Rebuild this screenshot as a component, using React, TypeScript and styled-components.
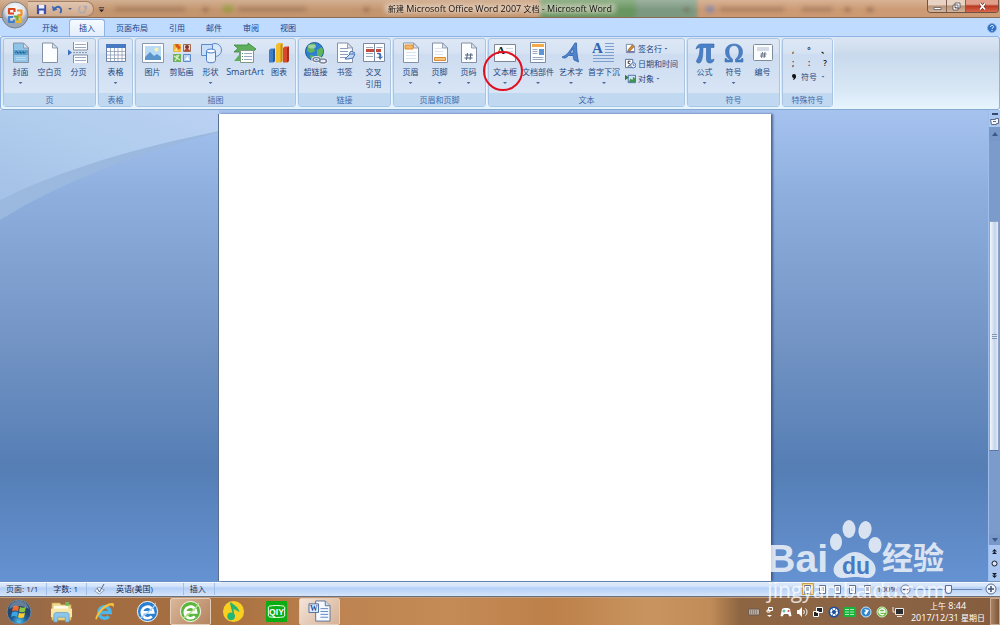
import React from 'react';
import styled, { createGlobalStyle, css } from 'styled-components';

const Global = createGlobalStyle`
  * { box-sizing: border-box; }
  body { margin: 0; font-family: "Open Sans", "Noto Sans CJK SC", sans-serif; font-size: 8px; color: #27477d; }
  button { font: inherit; color: inherit; border: 0; background: none; padding: 0; margin: 0; }
  svg { display: block; flex: none; }
`;

/* ---------- window ---------- */
const Window = styled.div`
  position: relative;
  display: flex;
  flex-direction: column;
  min-height: 100vh;
  overflow: hidden;
`;
const TitleBar = styled.header`
  position: relative;
  display: grid;
  grid-template-columns: 1fr auto 1fr;
  height: 18px;
  overflow: hidden;
  border-bottom: 1px solid #8c6c56;
  background: #c4966f;
`;
const Backdrop = styled.svg`
  position: absolute;
  inset: 0;
  width: 100%;
  height: 100%;
`;
const QuickBar = styled.div`
  position: relative;
  display: flex;
  align-items: center;
  gap: 4px;
  padding-left: 28px;
`;
const QuickPill = styled.div`
  display: flex;
  align-items: center;
  gap: 5px;
  height: 16px;
  padding: 0 5px 0 8px;
  border: 1px solid #a58068;
  border-left: 0;
  border-radius: 0 8px 8px 0;
  background: linear-gradient(#e2c6b0, #cfa98b);
`;
const TitleText = styled.h1`
  position: relative;
  margin: 0;
  font-size: 9px;
  line-height: 18px;
  font-weight: 400;
  color: #16120f;
  text-shadow: 0 0 4px #fff8, 0 0 6px #fff8;
  white-space: nowrap;
`;
const Han = styled.span`
  font-size: 8px;
`;
const WindowButtons = styled.div`
  position: relative;
  justify-self: end;
  display: flex;
  height: 13px;
  margin-right: 1px;
  border: 1px solid #6d5445;
  border-top: 0;
  border-radius: 0 0 4px 4px;
  overflow: hidden;
`;
const WindowButton = styled.button<{ $close?: boolean }>`
  display: grid;
  place-items: center;
  width: ${(p) => (p.$close ? 32 : 19)}px;
  border-right: ${(p) => (p.$close ? 0 : 1)}px solid #7a6050;
  background: ${(p) =>
    p.$close ? 'linear-gradient(#e0a08c 0 35%, #b93a22 50%, #d8674a)' : 'linear-gradient(#e8d3c3 0 40%, #b99478 50%, #d3b39b)'};
`;
const OfficeButton = styled.button`
  position: absolute;
  left: 1px;
  top: 1px;
  width: 28px;
  height: 28px;
  z-index: 3;
`;

/* ---------- tabs and ribbon ---------- */
const TabRow = styled.nav`
  display: flex;
  align-items: stretch;
  gap: 1px;
  height: 18px;
  padding: 1px 3px 0 32px;
  background: #bfdbff;
`;
const Tab = styled.button<{ $active?: boolean }>`
  padding: 0 9px;
  border: 1px solid transparent;
  border-bottom: 0;
  border-radius: 3px 3px 0 0;
  line-height: 14px;
  color: #15428b;
  ${(p) =>
    p.$active &&
    css`
      border-color: #8fb4e4;
      background: linear-gradient(#f6faff, #e3edfa);
    `}
`;
const HelpButton = styled.button`
  margin-left: auto;
  display: grid;
  place-items: center;
`;
const Ribbon = styled.section`
  display: flex;
  gap: 2px;
  height: 74px;
  padding: 1px 2px 2px;
  border: 1px solid #8db2e3;
  border-bottom-color: #86a9cf;
  border-radius: 3px;
  background: linear-gradient(#dbe6f4 0, #cfdded 18%, #c8d9ed 24%, #d8e8f5 75%, #e7f5ff);
`;
const GroupBox = styled.section`
  display: flex;
  flex-direction: column;
  flex: none;
  border: 1px solid #a9c5e6;
  border-radius: 3px;
  box-shadow: 1px 0 0 #eef6ff;
  background: linear-gradient(#dee8f5 0, #d6e3f3 20%, #cddcf0 24%, #dbe8f7);
`;
const GroupBody = styled.div`
  display: flex;
  flex: 1;
  padding: 2px 2px 0;
`;
const GroupName = styled.h2`
  margin: 0;
  height: 13px;
  line-height: 13px;
  font-size: 8px;
  font-weight: 400;
  text-align: center;
  color: #3e6aaa;
  background: #c1d8f1;
`;
const Tool = styled.button<{ $w?: number }>`
  position: relative;
  display: flex;
  flex-direction: column;
  align-items: center;
  width: ${(p) => p.$w ?? 29}px;
  white-space: nowrap;
`;
const ToolLabel = styled.span<{ $latin?: boolean }>`
  font-size: ${(p) => (p.$latin ? 9 : 8)}px;
  line-height: 12px;
  padding-top: 1px;
  white-space: pre-line;
`;
const Caret = styled.span`
  width: 4px;
  height: 2px;
  background: #47679a;
  clip-path: polygon(0 0, 100% 0, 50% 100%);
`;
const ToolCaret = styled(Caret)`
  margin-top: 4px;
`;
const Ring = styled.span`
  position: absolute;
  left: -8px;
  top: 10px;
  width: 40px;
  height: 40px;
  border: 2px solid #e01020;
  border-radius: 50%;
  z-index: 2;
`;
const SmallTools = styled.div`
  display: flex;
  flex-direction: column;
  width: 59px;
  padding-left: 2px;
`;
const SmallTool = styled.button`
  display: flex;
  align-items: center;
  gap: 2px;
  height: 15px;
  line-height: 13px;
  white-space: nowrap;
`;
const SymbolGrid = styled.div`
  display: grid;
  grid-template-columns: repeat(3, 16px);
  grid-auto-rows: 13px;
  align-content: start;
  width: 45px;
  padding-top: 2px;
`;
const SymbolKey = styled.button`
  color: #111;
  font-size: 8px;
  line-height: 13px;
  font-weight: 600;
`;
const SymbolMenu = styled.button`
  grid-column: 1 / -1;
  display: flex;
  align-items: center;
  gap: 4px;
  padding-left: 6px;
  height: 15px;
`;

/* ---------- document area ---------- */
const Workspace = styled.main`
  position: relative;
  display: flex;
  flex: 1;
  background: linear-gradient(#a6c2ef 0, #8fb0df 17%, #7394c4 49%, #557eb5 76%, #6592d2);
`;
const Swoosh = styled.svg`
  position: absolute;
  left: 0;
  top: 0;
`;
const Canvas = styled.div`
  position: relative;
  display: flex;
  flex: 1;
  justify-content: center;
  padding: 4px 0 0 2px;
`;
const Paper = styled.article`
  width: 56%;
  background: #fff;
  box-shadow: -1px 0 0 #5a6e8e, 2px 0 2px #33507fcc;
`;
const Scroll = styled.aside`
  position: relative;
  display: flex;
  flex-direction: column;
  width: 12px;
  border-left: 1px solid #9dbdec;
  background: #a9c6f1;
`;
const ScrollButton = styled.button<{ $h: number; $dark?: boolean }>`
  display: grid;
  place-items: center;
  height: ${(p) => p.$h}px;
  background: ${(p) => (p.$dark ? '#7798c8' : 'transparent')};
`;
const Track = styled.div`
  display: flex;
  flex-direction: column;
  flex: 1;
  background: #7b9ccb;
`;
const TrackGap = styled.div<{ $grow: number }>`
  flex: ${(p) => p.$grow};
`;
const Thumb = styled.div`
  display: grid;
  place-items: center;
  flex: 229;
  margin-right: 1px;
  border: 1px solid #8ba3c9;
  border-bottom-color: #5b76a2;
  background: linear-gradient(90deg, #f4f8fd, #c4d3ea 60%, #e3ebf7);
`;
const Grip = styled.span`
  width: 5px;
  height: 5px;
  background: repeating-linear-gradient(#8295b4 0 1px, #dbe4f2 1px 2px);
`;

/* ---------- status bar ---------- */
const StatusBar = styled.footer`
  display: flex;
  align-items: center;
  height: 16px;
  border-top: 1px solid #6f92c4;
  border-bottom: 1px solid #68707e;
  box-shadow: inset 0 1px 0 #f2f7ff;
  background: linear-gradient(#d9e7fb 0 25%, #b5d0f6 45%, #d6e5fa);
  line-height: 14px;
  color: #1d2c4c;
`;
const StatusCell = styled.button<{ $wide?: boolean }>`
  display: flex;
  align-items: center;
  height: 12px;
  padding: 0 ${(p) => (p.$wide ? 30 : 8)}px 0 6px;
  border-right: 1px solid #a3bee6;
`;
const StatusCheck = styled(StatusCell)`
  border-right: 0;
  padding: 0 4px 0 6px;
`;
const StatusRight = styled.div`
  display: flex;
  align-items: center;
  gap: 3px;
  margin-left: auto;
  padding-right: 3px;
`;
const ViewButton = styled.button<{ $on?: boolean }>`
  display: grid;
  place-items: center;
  width: 12px;
  height: 12px;
  border: 1px solid ${(p) => (p.$on ? '#c9a04e' : 'transparent')};
  background: ${(p) => (p.$on ? '#fbd992' : 'transparent')};
`;
const ZoomRange = styled.input`
  appearance: none;
  width: 68px;
  height: 12px;
  margin: 0;
  background: linear-gradient(#6d87b3, #6d87b3) center / 100% 1px no-repeat;
  &::-webkit-slider-thumb {
    appearance: none;
    width: 7px;
    height: 9px;
    border: 1px solid #566f9d;
    border-radius: 1px 1px 4px 4px;
    background: #f2f6fd;
  }
`;

/* ---------- taskbar ---------- */
const TaskBar = styled.footer`
  display: flex;
  align-items: stretch;
  height: 28px;
  border-top: 1px solid #c59c7a;
  background: linear-gradient(90deg, #93694b 0, #a06b42 8%, #a8703f 22%, #bd8350 34%, #c48b57 45%, #bd8049 55%, #c99460 65%, #c18c58 71%, #8d6542 74%, #8b6446 88%, #855d3e);
`;
const TaskButton = styled.button<{ $open?: boolean; $front?: boolean }>`
  display: grid;
  place-items: center;
  width: 41px;
  margin-right: 2px;
  border: 1px solid transparent;
  border-radius: 2px;
  ${(p) =>
    p.$open &&
    css`
      border-color: #e6cdb9;
      background: ${p.$front ? 'linear-gradient(135deg, #f3e4d8, #d5b196)' : 'linear-gradient(135deg, #d9b799, #b48460)'};
    `}
`;
const StartButton = styled.button`
  display: grid;
  place-items: center;
  width: 37px;
  margin-right: 4px;
`;
const Tray = styled.div`
  display: flex;
  align-items: center;
  margin-left: auto;
`;
const TrayButton = styled.button`
  display: grid;
  place-items: center;
  width: 16px;
  height: 20px;
`;
const Clock = styled.time`
  width: 84px;
  font-size: 9px;
  line-height: 12px;
  text-align: center;
  color: #fff;
  white-space: nowrap;
`;
const ShowDesktop = styled.button`
  width: 10px;
  border: 1px solid #c9a78c;
  background: linear-gradient(90deg, #a98466, #7c5638);
`;

/* ---------- watermark ---------- */
const Watermark = styled.div`
  position: absolute;
  right: 54px;
  bottom: 23px;
  z-index: 4;
  opacity: 0.76;
  color: #fff;
  text-align: right;
`;
const MarkRow = styled.div`
  display: flex;
  align-items: flex-end;
  justify-content: flex-end;
  height: 60px;
  padding-right: 2px;
  font-family: "Liberation Sans", "Noto Sans CJK SC", sans-serif;
  font-weight: 700;
`;
const MarkLatin = styled.span`
  font-size: 39px;
  line-height: 38px;
`;
const MarkHan = styled.span`
  font-size: 31px;
  line-height: 38px;
`;
const MarkUrl = styled.div`
  font-size: 21px;
  line-height: 24px;
`;

/* ---------- drawings ---------- */
const Ico = ({ children, s = 24, v = 24 }: { children: React.ReactNode; s?: number; v?: number }) => (
  <svg width={s} height={s} viewBox={`0 0 ${v} ${v}`} aria-hidden="true">
    {children}
  </svg>
);
const Sheet = ({ fill = '#fbfdff' }: { fill?: string }) => (
  <>
    <path d="M4.500 2h10l5 5v14.500h-15z" fill={fill} stroke="#8491a6" />
    <path d="M14.500 2v5h5z" fill="#d9e2ee" stroke="#8491a6" strokeWidth=".8" />
  </>
);
const Lines = ({ x, w, ys, c = '#9aa9c2' }: { x: number; w: number; ys: number[]; c?: string }) => (
  <path d={ys.map((y) => `M${x} ${y}h${w}`).join('')} stroke={c} fill="none" />
);

const icons: Record<string, React.ReactNode> = {
  cover: (
    <Ico>
      <Sheet fill="#8fc4e6" />
      <path d="M5 9h14v5H5z" fill="#5ea3d0" />
      <path d="M6 11.500l2-1 1 2 2-2 1 2 2-2 1 2 2-2" stroke="#1c5b8f" fill="none" />
      <Lines x={7} w={10} ys={[16.5, 18.5]} c="#b9dcf0" />
    </Ico>
  ),
  blank: <Ico><Sheet /></Ico>,
  pageBreak: (
    <Ico>
      <path d="M6.500 1v8h14V1M6.500 22v-8h14v8" fill="#fff" stroke="#7f8da5" />
      <Lines x={8} w={11} ys={[3.5, 6.5, 16.5, 19.5]} />
      <path d="M6 11.500h15" stroke="#8d9ab0" strokeDasharray="2 1" />
      <path d="M1 8.500l4 3-4 3z" fill="#3d6fc0" />
    </Ico>
  ),
  table: (
    <Ico>
      <path d="M2.500 3.500h19v17h-19z" fill="#fff" stroke="#6b84ad" />
      <path d="M2 3h20v4H2z" fill="#4a79c4" />
      <path d="M3 10.500h18M3 14h18M3 17.500h18M6.500 7v13M10.500 7v13M14 7v13M18 7v13" stroke="#8d9ab2" strokeWidth=".8" />
    </Ico>
  ),
  picture: (
    <Ico>
      <path d="M1.500 2.500h21v19h-21z" fill="#fff" stroke="#8b98ad" />
      <path d="M4 5h16v14H4z" fill="#b7daf5" />
      <path d="M4 16l5-5 4 4 3-2 4 3v3H4z" fill="#5b94cb" />
      <circle cx="15.500" cy="8.500" r="2" fill="#fff1a8" />
    </Ico>
  ),
  clipArt: (
    <Ico>
      <path d="M3 3h8v8H3z" fill="#f3b433" /><path d="M5 3h3l3 4-4 2z" fill="#d5581f" /><path d="M4 10l3-4 1 4z" fill="#ffe27a" />
      <path d="M13.500 3.500h7v7h-7z" fill="#f0dcd0" stroke="#9a6a55" /><circle cx="17" cy="6" r="2" fill="#7d3527" /><path d="M14 10c1-3 5-3 6 0z" fill="#b74a36" />
      <path d="M3 13h8v8H3z" fill="#72b45a" /><path d="M4 15l6 4M9 14l-4 6M7 14v2" stroke="#d9f0c8" strokeWidth="1.200" />
      <path d="M13.500 13.500h7v7h-7z" fill="#b8d3f4" stroke="#5f8ccb" /><path d="M15 19l3-4 1 4z" fill="#fff" />
    </Ico>
  ),
  shapes: (
    <Ico>
      <circle cx="16" cy="9" r="6.500" fill="#d9e9fb" stroke="#5a8aca" />
      <path d="M2.500 3.500h11v11h-11z" fill="#c9defa" stroke="#5a8aca" />
      <path d="M7.500 10v9.500c0 3 9 3 9 0V10z" fill="#e8f2fe" stroke="#4a7fc6" />
      <ellipse cx="12" cy="10" rx="4.500" ry="2" fill="#fff" stroke="#4a7fc6" />
    </Ico>
  ),
  smartArt: (
    <Ico>
      <path d="M1 4h14V2l8 6-7 6V11H1l4-3.500z" fill="#5fae5a" stroke="#37853d" strokeWidth=".8" />
      <path d="M1 20l5-6V8h4v12z" fill="#5fae5a" />
      <path d="M7.500 9.500h13v12h-13z" fill="#fff" stroke="#809a85" />
      <Lines x={11} w={8} ys={[12.5, 15.5, 18.5]} /><Lines x={9} w={1} ys={[12.5, 15.5, 18.5]} c="#3d8f49" />
    </Ico>
  ),
  chart: (
    <Ico>
      <path d="M2 9l2-1.500h4V20l-2 1.500H2z" fill="#3f7fca" />
      <path d="M9 4l2-2h4.500v18l-2 1.500H9z" fill="#f2bd2b" /><path d="M13.500 4l2-2v18l-2 1.500z" fill="#c98e12" />
      <path d="M16 7l2-1.500h4V20l-2 1.500h-4z" fill="#d8482d" /><path d="M20 7l2-1.500V20l-2 1.500z" fill="#a3301c" />
      <path d="M6 9l2-1.500V20l-2 1.500z" fill="#265a9c" />
    </Ico>
  ),
  link: (
    <Ico>
      <circle cx="10.500" cy="10.500" r="9" fill="#2f7fcf" stroke="#205c9c" />
      <path d="M4 5c3-3 7-3 8-1l-2 3 1 3-4 2-4-2zM13 9l5-3c2 4 1 8-2 11l-3-3zM6 14l4 1-1 4c-2 0-3-2-3-5z" fill="#5fb45c" />
      <ellipse cx="8" cy="5.500" rx="4" ry="2" fill="#fff" opacity=".4" />
      <g fill="none" strokeWidth="3.200" stroke="#f2f5fa"><ellipse cx="12.500" cy="18.500" rx="3.500" ry="2" /><ellipse cx="19" cy="20" rx="3.500" ry="2" /></g>
      <g fill="none" strokeWidth="1.500" stroke="#75839b"><ellipse cx="12.500" cy="18.500" rx="3.500" ry="2" /><ellipse cx="19" cy="20" rx="3.500" ry="2" /></g>
    </Ico>
  ),
  bookmark: (
    <Ico>
      <Sheet />
      <Lines x={7} w={8} ys={[7.5, 10.5, 13.5, 16.5]} c="#8d9cb8" />
      <path d="M12 18l5-5 5 0-2 4-5 1zM16 13l2-3 4 2" fill="#c3d8f4" stroke="#4571b4" />
    </Ico>
  ),
  crossRef: (
    <Ico>
      <path d="M1.500 2.500h11v18h-11zM12.500 2.500h10v18h-10z" fill="#fff" stroke="#7b89a1" />
      <Lines x={4} w={7} ys={[6.5, 12.5, 15.5]} /><Lines x={14.500} w={6} ys={[6.5, 16.5]} />
      <path d="M4 8h8v3H4z" fill="#c54b3c" /><path d="M14 8h5v3h-5z" fill="#c54b3c" />
      <path d="M15 12c4-1 5 1 4 4l2-1-3 4-2-4 1 1c1-2 0-3-2-3z" fill="#3f6eb8" />
    </Ico>
  ),
  header: (<Ico><Sheet /><path d="M6 4h8v4H6z" fill="#f5b667" stroke="#d98e35" /><Lines x={7} w={10} ys={[11.5, 14.5, 17.5]} c="#dce4ef" /></Ico>),
  footer: (<Ico><Sheet /><path d="M6.500 16.500h11v3h-11z" fill="#f5c47e" stroke="#d98e35" /><Lines x={7} w={8} ys={[7.5, 10.5, 13.5]} c="#dce4ef" /></Ico>),
  pageNo: (<Ico><Sheet /><path d="M10.500 12l-1 7M14 12l-1 7M8 14h8M7.500 17h8" stroke="#52637f" /></Ico>),
  textBox: (
    <Ico>
      <path d="M1.500 3.500h21v17h-21z" fill="#fbfcfe" stroke="#7f8794" />
      <Lines x={13} w={7} ys={[7.5, 10.5]} c="#d3dae5" />
      <text x="4" y="13" fontSize="11" fontWeight="700" fontFamily="Liberation Serif, serif" fill="#222">A</text>
    </Ico>
  ),
  parts: (
    <Ico>
      <path d="M4.500 1.500h15v20h-15z" fill="#fbfdff" stroke="#7d8ca4" />
      <path d="M6 3h12v3H6z" fill="#f3ab47" /><path d="M13 8h5v6h-5z" fill="#5c94d6" />
      <Lines x={6.500} w={5} ys={[8.5, 10.5, 12.5]} /><Lines x={6.500} w={11} ys={[16.5, 18.5]} />
    </Ico>
  ),
  wordArt: (
    <Ico>
      <path d="M3 16C8 15 12 8 16 2h1.500c0 7 .5 12 2 19l-4.500-2c-.5-1.500-.7-3-.8-4.500H9.500C7.500 17 5 18 3 16zM11 12h3.200V7.500z" fill="#4d84cb" stroke="#2f61a8" strokeWidth=".8" fillRule="evenodd" />
    </Ico>
  ),
  dropCap: (
    <Ico>
      <path d="M13 2.500h9M13 5.500h9M13 8.500h9M13 11.500h9M1 14.500h21M1 17.500h21M1 20.500h21" stroke="#7c9fd0" />
      <text x="0" y="12" fontSize="15" fontWeight="700" fontFamily="Liberation Serif, serif" fill="#2f65b3">A</text>
    </Ico>
  ),
  pi: (
    <Ico>
      <path d="M3 8C4 4 6 3 9 3h12v3.500h-3.500V17c0 2 1.500 2.500 3.500 1-.5 3-2 4-4 4-3 0-3.500-2-3.500-4V6.500H10c0 6-.5 11-2 14-1 2-4 2-4.500 0C3.500 18 7 17 7 6.500 5.500 6.500 4.500 7 3 8z" fill="#4a80c5" stroke="#2f64ab" strokeWidth=".6" />
    </Ico>
  ),
  omega: (
    <Ico>
      <path d="M3 17.500h1.500l.8 1.500H9C5 17 3.500 14.500 3.500 10.500 3.500 6 7 3 12 3s8.500 3 8.500 7.500c0 4-1.500 6.500-5.500 8.500h3.700l.8-1.500H21V21h-7.500v-3C16 16.500 17 14 17 10.500 17 7 15 4.500 12 4.500s-5 2.500-5 6c0 3.500 1 6 3.500 7.500v3H3z" fill="#4a80c5" stroke="#2f64ab" strokeWidth=".5" />
    </Ico>
  ),
  number: (
    <Ico>
      <rect x="2.500" y="3.500" width="19" height="16" rx="1" fill="#fbfcfe" stroke="#818b9c" />
      <path d="M6 6h12v4H6z" fill="#d5dbe5" />
      <path d="M11.500 11l-1 6M14 11l-1 6M9.500 13h6M9 15h6" stroke="#4c5a72" strokeWidth=".8" />
    </Ico>
  ),
  sign: (<Ico s={11} v={12}><path d="M1.500 1.500h7l2 2v7h-9z" fill="#fff" stroke="#7586a3" /><path d="M3 8l5-6 2 2-5 5z" fill="#d58a2e" stroke="#6a4312" strokeWidth=".6" /><path d="M2 9.500h8" stroke="#5c3d8c" /></Ico>),
  date: (<Ico s={11} v={12}><path d="M.5 1.500h8v9h-8z" fill="#fff" stroke="#4d679a" /><path d="M6 3.500H3.500V6C6 5 7 9 3 9" fill="none" stroke="#222" /><circle cx="9" cy="8" r="2.800" fill="#eaf2fd" stroke="#4270b6" /><path d="M9 6.500V8h1.500" stroke="#24437a" fill="none" strokeWidth=".7" /></Ico>),
  object: (<Ico s={11} v={12}><path d="M3.500 2.500h8v8h-8z" fill="#cfe2f8" stroke="#456aa5" /><path d="M4 10l2-4 2 2 1-4 2 2v4z" fill="#3c9650" /><path d="M0 2l4 3-4 3z" fill="#2d7a3d" /></Ico>),
};

type Item = { icon: string; label: string; caret?: boolean; w?: number; latin?: boolean; ring?: boolean };
const tools: Record<string, Item[]> = {
  页: [{ icon: 'cover', label: '封面', caret: true }, { icon: 'blank', label: '空白页' }, { icon: 'pageBreak', label: '分页' }],
  表格: [{ icon: 'table', label: '表格', caret: true }],
  插图: [
    { icon: 'picture', label: '图片' }, { icon: 'clipArt', label: '剪贴画' }, { icon: 'shapes', label: '形状', caret: true },
    { icon: 'smartArt', label: 'SmartArt', w: 40, latin: true }, { icon: 'chart', label: '图表', w: 28 },
  ],
  链接: [{ icon: 'link', label: '超链接' }, { icon: 'bookmark', label: '书签' }, { icon: 'crossRef', label: '交叉\n引用' }],
  页眉和页脚: [{ icon: 'header', label: '页眉', caret: true }, { icon: 'footer', label: '页脚', caret: true }, { icon: 'pageNo', label: '页码', caret: true }],
  文本: [
    { icon: 'textBox', label: '文本框', caret: true, w: 28, ring: true }, { icon: 'parts', label: '文档部件', caret: true, w: 38 },
    { icon: 'wordArt', label: '艺术字', caret: true, w: 28 }, { icon: 'dropCap', label: '首字下沉', caret: true, w: 38 },
  ],
  符号: [{ icon: 'pi', label: '公式', caret: true }, { icon: 'omega', label: '符号', caret: true }, { icon: 'number', label: '编号' }],
};

const Group = ({ name, children }: { name: string; children?: React.ReactNode }) => (
  <GroupBox aria-label={name}>
    <GroupBody>
      {(tools[name] ?? []).map((t) => (
        <Tool key={t.label} $w={t.w}>
          {icons[t.icon]}
          <ToolLabel $latin={t.latin}>{t.label}</ToolLabel>
          {t.caret && <ToolCaret />}
          {t.ring && <Ring />}
        </Tool>
      ))}
      {children}
    </GroupBody>
    <GroupName>{name}</GroupName>
  </GroupBox>
);

const Flag = () => (
  <>
    <path d="M5 8c2-1.500 4-1.500 6-.3l-1 4.800c-2-1.200-4-1.200-6 0z" fill="#ef6a30" />
    <path d="M12 8c2 1 4 1 6-.3l-1 4.800c-2 1-4 1-6 0z" fill="#8cc63f" />
    <path d="M4 13.500c2-1.200 4-1.200 6 0l-1 4.500c-2-1.200-4-1.200-6 0z" fill="#3ba4e4" />
    <path d="M11 13.800c2 1 4 1 6-.2l-1 4.600c-2 1-4 1-6 0z" fill="#fccb2f" />
  </>
);

const trayIcons: [string, React.ReactNode][] = [
  ['键盘', <Ico key="i" s={12} v={12}><rect x=".5" y="3" width="11" height="6" rx="1" fill="#b9aea6" stroke="#6b5a4e" /><path d="M2 5h8M2 7h8" stroke="#6b5a4e" strokeDasharray="1 1" /></Ico>],
  ['显示隐藏的图标', <Ico key="i" s={12} v={12}><path d="M4.500 1.500h4v3h-4zM3 4h3v2H3z" fill="none" stroke="#fff" /><path d="M3 9h5l-2.500 2z" fill="#fff" /></Ico>],
  ['游戏', <Ico key="i" s={12} v={12}><path d="M2 3l2-1h4l2 1 1.500 7-2 .5L8 8H4l-1.500 2.500-2-.5z" fill="#fff" /><path d="M2.500 5h3M4 3.500v3" stroke="#3a9" /><circle cx="8.500" cy="5" r="1" fill="#d44" /></Ico>],
  ['音量', <Ico key="i" s={12} v={12}><path d="M1 4h2l3-3v10L3 8H1z" fill="#fff" /><path d="M7.500 4c1 1 1 3 0 4M9.500 2.500c2 2 2 5 0 7" stroke="#fff" fill="none" /></Ico>],
  ['网络', <Ico key="i" s={12} v={12}><path d="M4.500 1.500h6v5h-6zM1.500 5.500h5v5h-5z" fill="#222" stroke="#fff" /></Ico>],
  ['安全', <Ico key="i" s={12} v={12}><circle cx="6" cy="6" r="5.500" fill="#1d4f9c" /><circle cx="6" cy="6" r="3" fill="none" stroke="#fff" strokeWidth="2" strokeDasharray="2.500 .6" /></Ico>],
  ['爱奇艺', <Ico key="i" s={12} v={12}><path d="M0 1h12v10H0z" fill="#17b53a" /><path d="M1 3.500h10M1 6h10M1 8.500h10" stroke="#a9eeb5" strokeDasharray="4 1" /></Ico>],
  ['同步', <Ico key="i" s={12} v={12}><circle cx="6" cy="6" r="5" fill="#2d87cf" stroke="#cde6fa" /><path d="M4 3l5 1-3 5-2-2 2-2z" fill="#fff" /></Ico>],
  ['浏览器', <Ico key="i" s={12} v={12}><circle cx="6" cy="6" r="5" fill="#62b83a" stroke="#d4f2c0" /><path d="M3 6h6a3 3 0 1 0-1 2" stroke="#fff" strokeWidth="1.300" fill="none" /></Ico>],
  ['显示器', <Ico key="i" s={12} v={12}><path d="M3.500 2.500h8v6h-8z" fill="#2c2c2c" stroke="#e8e8e8" /><path d="M5 10.500h5M1 1v5h2" stroke="#e8e8e8" fill="none" /></Ico>],
];

const Browser = ({ a, b, ring }: { a: string; b: string; ring?: boolean }) => (
  <Ico s={23}>
    {ring && <circle cx="12" cy="12" r="10.500" fill={b} stroke="#fff" strokeWidth="1" />}
    <path d="M5.500 13h12.500a6 6 0 1 0-1.500 4" fill="none" stroke={ring ? '#fff' : a} strokeWidth={ring ? 2.8 : 3.6} />
    {ring ? <path d="M4 18C1 23 22 6 20 3" fill="none" stroke={a} strokeWidth="1.500" /> : <path d="M4 20C-1 23 8 3 20 3c3 0 2 3 1 5 0-6-13 1-17 12z" fill="#f7c13a" />}
  </Ico>
);

export default function App() {
  return (
    <Window>
      <Global />
      <TitleBar>
        <Backdrop viewBox="0 0 1000 18" preserveAspectRatio="none" aria-hidden="true">
          <defs>
            <filter id="soft" x="-10%" y="-60%" width="120%" height="220%"><feGaussianBlur stdDeviation="2" /></filter>
            <linearGradient id="sheen" x2="0" y2="1"><stop stopColor="#fff" stopOpacity=".25" /><stop offset=".6" stopColor="#fff" stopOpacity="0" /></linearGradient>
          </defs>
          <path d="M697 0h303v18H697z" fill="#cc9a73" />
          <g filter="url(#soft)">
            <path d="M540 -4h100v26H540z" fill="#689560" /><path d="M636 -4h61v26h-61z" fill="#7c9880" />
            <path d="M115 7h70v5h-70zM238 7h68v5h-68zM720 7h64v5h-64zM802 7h30v5h-30z" fill="#8d654a" opacity=".5" />
            <path d="M223 5h10v8h-10z" fill="#9a9a45" /><path d="M706 6h8v7h-8z" fill="#8a86a5" />
            <path d="M203 8h5v4h-5zM364 8h5v4h-5zM684 8h5v4h-5zM845 8h5v4h-5zM867 8h6v4h-6z" fill="#76523d" opacity=".7" />
            <path d="M384 4h232v10H384z" fill="#eadccf" opacity=".45" />
          </g>
          <path d="M0 0h1000v18H0z" fill="url(#sheen)" />
        </Backdrop>
        <QuickBar>
          <QuickPill>
            <button aria-label="保存"><Ico s={11} v={12}><path d="M1 1h10v10H1z" fill="#3b4fae" /><path d="M3 1h6v4H3zM3.500 7h5v4h-5z" fill="#eef1fb" /></Ico></button>
            <button aria-label="撤消"><Ico s={11} v={12}><path d="M3 5c4-4 9-1 6 5" fill="none" stroke="#3566b8" strokeWidth="2" /><path d="M0 2l1 6 5-2z" fill="#3566b8" /></Ico></button>
            <Caret />
            <button aria-label="恢复"><Ico s={11} v={12}><path d="M9 4c2 6-7 8-7 2 0-2 1-3 2-3" fill="none" stroke="#a8a9b5" strokeWidth="1.500" /><path d="M6 2h5v4z" fill="#a8a9b5" /></Ico></button>
          </QuickPill>
          <button aria-label="自定义快速访问工具栏"><Ico s={7} v={8}><path d="M1 2h6" stroke="#2b2430" /><path d="M1 4h6L4 7z" fill="#2b2430" /></Ico></button>
        </QuickBar>
        <TitleText><Han>新建</Han> Microsoft Office Word 2007 <Han>文档</Han> - Microsoft Word</TitleText>
        <WindowButtons>
          <WindowButton aria-label="最小化"><Ico s={9} v={9}><path d="M1 5.500h7v2H1z" fill="#fff" stroke="#4d4d55" strokeWidth=".7" /></Ico></WindowButton>
          <WindowButton aria-label="还原"><Ico s={9} v={9}><path d="M3 1h5v5H3zM1 3h5v5H1z" fill="#fff" stroke="#4d4d55" strokeWidth=".8" /><path d="M3 5h1.500v1H3z" fill="#4d4d55" /></Ico></WindowButton>
          <WindowButton $close aria-label="关闭"><Ico s={9} v={9}><path d="M2 1.500l5 6M7 1.500l-5 6" stroke="#6b2a20" strokeWidth="3" /><path d="M2 1.500l5 6M7 1.500l-5 6" stroke="#fff" strokeWidth="1.800" /></Ico></WindowButton>
        </WindowButtons>
      </TitleBar>
      <OfficeButton aria-label="Office">
        <svg width="28" height="28" viewBox="0 0 28 28" aria-hidden="true">
          <defs><radialGradient id="orb" cy=".3"><stop stopColor="#fff" /><stop offset=".7" stopColor="#dfe3ea" /><stop offset="1" stopColor="#9ba6b8" /></radialGradient></defs>
          <circle cx="14" cy="14" r="13" fill="url(#orb)" stroke="#7d7f88" />
          <g fill="none" strokeWidth="2.200" strokeLinejoin="round">
            <path d="M13 12.500H8V8h5.500v3" stroke="#d8481f" /><path d="M16 9.500h4.500v4.500h-4" stroke="#f0902a" />
            <path d="M12 16H8v5h5v-2.500" stroke="#3f7fcb" /><path d="M15 16h5v5h-5z" stroke="#f0b429" /><path d="M12.500 15.500h4v4" stroke="#6aab3d" />
          </g>
        </svg>
      </OfficeButton>

      <TabRow>
        {['开始', '插入', '页面布局', '引用', '邮件', '审阅', '视图'].map((t) => (
          <Tab key={t} $active={t === '插入'}>{t}</Tab>
        ))}
        <HelpButton aria-label="帮助">
          <Ico s={10} v={10}><circle cx="5" cy="5" r="4.500" fill="#2f6fc4" stroke="#87aede" /><path d="M3.500 4c0-2 3.300-2 3 0-.2 1-1.500 1-1.500 2M5 7v1" stroke="#fff" fill="none" /></Ico>
        </HelpButton>
      </TabRow>

      <Ribbon>
        <Group name="页" />
        <Group name="表格" />
        <Group name="插图" />
        <Group name="链接" />
        <Group name="页眉和页脚" />
        <Group name="文本">
          <SmallTools>
            <SmallTool>{icons.sign}签名行<Caret /></SmallTool>
            <SmallTool>{icons.date}日期和时间</SmallTool>
            <SmallTool>{icons.object}对象<Caret /></SmallTool>
          </SmallTools>
        </Group>
        <Group name="符号" />
        <Group name="特殊符号">
          <SymbolGrid>
            {[',', '°', '、', ';', ':', '?'].map((s) => <SymbolKey key={s}>{s}</SymbolKey>)}
            <SymbolMenu>
              <Ico s={6} v={6}><circle cx="3" cy="2" r="2" fill="#111" /><path d="M5 2c0 2-1 3.500-3 4l1-3z" fill="#111" /></Ico>
              符号<Caret />
            </SymbolMenu>
          </SymbolGrid>
        </Group>
      </Ribbon>

      <Workspace>
        <Swoosh width="219" height="112" viewBox="0 0 219 112" aria-hidden="true">
          <defs>
            <linearGradient id="sky" x1="0" y1="1" x2="1" y2="0"><stop stopColor="#a4c1e6" /><stop offset=".5" stopColor="#b0cdee" /><stop offset="1" stopColor="#bcd1f4" /></linearGradient>
          </defs>
          <path d="M0 0h240v17C160 36 70 66 0 110z" fill="#9bb8df" />
          <path d="M0 0h240v17C150 34 70 56 0 90z" fill="url(#sky)" />
        </Swoosh>
        <Canvas><Paper aria-label="文档" /></Canvas>
        <Scroll>
          <ScrollButton $h={6} aria-label="拆分"><Ico s={6} v={6}><path d="M0 4h6" stroke="#34496f" strokeWidth="2" /></Ico></ScrollButton>
          <ScrollButton $h={11} aria-label="标尺"><Ico s={9} v={9}><path d="M.5 2.500h5v-1h3v5h-2v1h-5z" fill="#f4f6fa" stroke="#5c6a84" /><path d="M3 4.500h3" stroke="#5c6a84" /></Ico></ScrollButton>
          <ScrollButton $h={14} $dark aria-label="向上滚动"><Ico s={6} v={6}><path d="M0 5l3-4 3 4z" fill="#3c5788" /></Ico></ScrollButton>
          <Track><TrackGap $grow={81} /><Thumb><Grip /></Thumb><TrackGap $grow={84} /></Track>
          <ScrollButton $h={11} $dark aria-label="向下滚动"><Ico s={6} v={6}><path d="M0 1l3 4 3-4z" fill="#3c5788" /></Ico></ScrollButton>
          <ScrollButton $h={12} aria-label="前一页"><Ico s={5} v={6}><path d="M0 3l3-3 3 3zM0 6l3-3 3 3z" fill="#161c2c" /></Ico></ScrollButton>
          <ScrollButton $h={12} aria-label="选择浏览对象"><Ico s={7} v={7}><circle cx="3.500" cy="3.500" r="2.500" fill="#d8e2f2" stroke="#161c2c" /></Ico></ScrollButton>
          <ScrollButton $h={12} aria-label="下一页"><Ico s={5} v={6}><path d="M0 0l3 3 3-3zM0 3l3 3 3-3z" fill="#161c2c" /></Ico></ScrollButton>
        </Scroll>
      </Workspace>

      <StatusBar>
        <StatusCell>页面: 1/1</StatusCell>
        <StatusCell>字数: 1</StatusCell>
        <StatusCheck aria-label="拼写检查"><Ico s={13} v={13}><path d="M1.500 8l4-4 6 3-5 4z" fill="#eef3fb" stroke="#8f9fba" /><path d="M4 5l2.500 4L11 1" stroke="#54678c" fill="none" /></Ico></StatusCheck>
        <StatusCell $wide>英语(美国)</StatusCell>
        <StatusCell>插入</StatusCell>
        <StatusRight>
          {['页面视图', '阅读版式', 'Web 版式', '大纲视图', '普通视图'].map((v, i) => (
            <ViewButton key={v} $on={i === 0} aria-label={v}>
              <Ico s={9} v={9}><path d="M1.500.5h6v8h-6z" fill="#fff" stroke="#5c6f94" /><path d="M3 3h3M3 5h3" stroke="#5c6f94" /></Ico>
            </ViewButton>
          ))}
          <button>100%</button>
          <button aria-label="缩小"><Ico s={11} v={12}><circle cx="6" cy="6" r="5" fill="#f1f5fc" stroke="#5c6f94" /><path d="M3 6h6" stroke="#3c5079" strokeWidth="1.500" /></Ico></button>
          <ZoomRange type="range" aria-label="显示比例" defaultValue={50} />
          <button aria-label="放大"><Ico s={12} v={12}><circle cx="6" cy="6" r="5" fill="#f1f5fc" stroke="#5c6f94" /><path d="M3 6h6M6 3v6" stroke="#3c5079" strokeWidth="1.500" /></Ico></button>
        </StatusRight>
      </StatusBar>

      <TaskBar>
        <StartButton aria-label="开始菜单">
          <svg width="26" height="26" viewBox="-2 0 26 26" aria-hidden="true">
            <defs><radialGradient id="start" cy=".9"><stop stopColor="#4fc0e8" /><stop offset=".6" stopColor="#205f98" /><stop offset="1" stopColor="#24466c" /></radialGradient></defs>
            <circle cx="11" cy="13" r="12" fill="url(#start)" stroke="#6d8aa0" />
            <Flag />
            <path d="M1 10C3-1 19-1 21 10 15 6 7 6 1 10z" fill="#fff" opacity=".3" />
          </svg>
        </StartButton>
        <TaskButton aria-label="资源管理器">
          <Ico s={23}>
            <path d="M2 3h8l2 2h10v16H2z" fill="#f0d684" stroke="#b99a4a" strokeWidth=".7" /><path d="M4 6h15v5H4z" fill="#fffbe6" /><path d="M16 2h4v4h-4z" fill="#77b65c" />
            <path d="M1 9h22v9H1z" fill="#f8e7a6" /><path d="M4 23v-7c0-2 1-3 3-3h10c2 0 3 1 3 3v7h-4v-5H8v5z" fill="#8ec6e8" stroke="#5a9bc9" strokeWidth=".7" />
          </Ico>
        </TaskButton>
        <TaskButton aria-label="Internet Explorer"><Browser a="#4db7ea" b="" /></TaskButton>
        <TaskButton aria-label="浏览器"><Browser a="#a9d4f6" b="#2b7fd0" ring /></TaskButton>
        <TaskButton $open aria-label="安全浏览器"><Browser a="#b7e08e" b="#5cb53c" ring /></TaskButton>
        <TaskButton aria-label="音乐">
          <Ico s={23}><circle cx="12" cy="12" r="11" fill="#f9cf21" /><circle cx="9.500" cy="17" r="4" fill="#23b573" /><path d="M12.500 17L9 3c2 3 6 3 8 8-2-1-3-2-5-2" fill="#23b573" stroke="#23b573" strokeWidth="1.500" /></Ico>
        </TaskButton>
        <TaskButton aria-label="爱奇艺">
          <Ico s={23}>
            <rect x="1" y="1" width="22" height="22" rx="1" fill="#0bae12" /><path d="M4 6.500c5-1 11-1 16 0M4 17.500c5 1 11 1 16 0M3.500 7v10M20.500 7v10" stroke="#fff" fill="none" />
            <text x="12" y="15.500" fontSize="9" fontWeight="700" textAnchor="middle" fontFamily="Liberation Sans, sans-serif" fill="#fff">QIY</text>
          </Ico>
        </TaskButton>
        <TaskButton $open $front aria-label="Word">
          <Ico s={23}>
            <path d="M8 1h10l5 5v16H8z" fill="#f6f9fd" stroke="#5e7396" /><path d="M18 1v5h5" fill="#cfdbec" stroke="#5e7396" /><Lines x={13} w={8} ys={[9, 12, 15, 18]} c="#5e87c6" />
            <path d="M1 4h10v9H1z" fill="#e6eefa" stroke="#4b6ba0" /><text x="6" y="11.500" fontSize="8" fontWeight="700" textAnchor="middle" fontFamily="Liberation Serif, serif" fill="#24509a">W</text>
          </Ico>
        </TaskButton>
        <Tray>
          {trayIcons.map(([name, icon]) => <TrayButton key={name} aria-label={name}>{icon}</TrayButton>)}
          <Clock><Han>上午</Han> 8:44<br />2017/12/31 <Han>星期日</Han></Clock>
        </Tray>
        <ShowDesktop aria-label="显示桌面" />
      </TaskBar>

      <Watermark>
        <MarkRow>
          <MarkLatin>Bai</MarkLatin>
          <svg width="54" height="60" viewBox="0 0 54 60" aria-hidden="true">
            <g fill="#fff">
              <ellipse cx="8" cy="24" rx="6" ry="8.500" /><ellipse cx="21" cy="11" rx="6.500" ry="9" />
              <ellipse cx="37" cy="12" rx="6.500" ry="9" transform="rotate(12 37 12)" /><ellipse cx="47" cy="27" rx="6.500" ry="8" />
              <path d="M27 34c7 0 10 4 16 8 7 6 6 17-3 18-6 0-8-1-13-1s-7 1-13 1C4 59 3 48 11 42c6-4 9-8 16-8z" />
            </g>
            <text x="28" y="56" fontSize="23" fontWeight="700" textAnchor="middle" fontFamily="Liberation Sans, sans-serif" fill="#3f74bb">du</text>
          </svg>
          <MarkHan>经验</MarkHan>
        </MarkRow>
        <MarkUrl>jingyan.baidu.com</MarkUrl>
      </Watermark>
    </Window>
  );
}
